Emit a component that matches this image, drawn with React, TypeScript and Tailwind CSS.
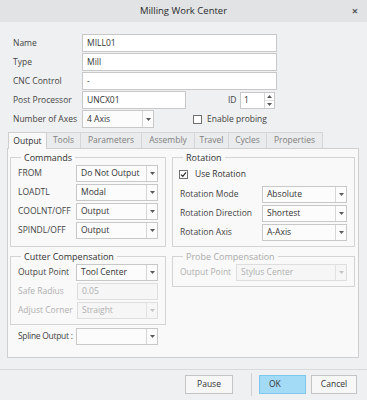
import React from 'react';

const Caret: React.FC<{ disabled?: boolean }> = ({ disabled }) => (
  <svg width="5" height="3" viewBox="0 0 5 3">
    <path d="M0 0H5L2.5 3Z" fill={disabled ? '#c4c4c4' : '#5a5a5a'} />
  </svg>
);

const TextBox: React.FC<{ value: string; className?: string; disabled?: boolean }> = ({ value, className, disabled }) => (
  <div
    className={`h-full border flex items-center px-[4px] ${disabled ? 'bg-[#f6f6f6] border-[#dedede] text-[#b0b0b0]' : 'bg-white border-[#c8c8c8] text-[#333]'} ${className ?? ''}`}
  >
    {value}
  </div>
);

const Select: React.FC<{ value: string; className?: string; disabled?: boolean }> = ({ value, className, disabled }) => (
  <div
    className={`h-full border flex items-stretch ${disabled ? 'bg-[#f6f6f6] border-[#dedede] text-[#b0b0b0]' : 'bg-[#fcfcfc] border-[#c8c8c8] text-[#333]'} ${className ?? ''}`}
  >
    <div className="flex-1 flex items-center px-[4px] whitespace-nowrap overflow-hidden">{value}</div>
    <div className={`w-[11px] border-l flex items-center justify-center ${disabled ? 'border-[#e2e2e2]' : 'border-[#d6d6d6]'}`}>
      <Caret disabled={disabled} />
    </div>
  </div>
);

const Check: React.FC<{ checked?: boolean }> = ({ checked }) => (
  <div className="w-[9px] h-[9px] border border-[#707070] bg-white flex items-center justify-center">
    {checked && (
      <svg width="7" height="7" viewBox="0 0 7 7">
        <path d="M1 3.6L2.8 5.3L6 1.4" stroke="#2a2a2a" strokeWidth="1.2" fill="none" />
      </svg>
    )}
  </div>
);

const Group: React.FC<{ title: string; disabled?: boolean; className?: string; children: React.ReactNode }> = ({ title, disabled, className, children }) => (
  <fieldset className={`border border-[#d4d4d4] px-[7px] ${className ?? ''}`}>
    <legend className={`ml-[3px] px-[3px] leading-[11px] text-[9px] ${disabled ? 'text-[#aaa]' : 'text-[#333]'}`}>{title}</legend>
    {children}
  </fieldset>
);

const FieldRow: React.FC<{ label: string; disabled?: boolean; children: React.ReactNode; labelW: string }> = ({ label, disabled, children, labelW }) => (
  <div className="flex items-center h-[17px]">
    <div className={`${labelW} shrink-0 whitespace-nowrap ${disabled ? 'text-[#b0b0b0]' : 'text-[#444]'}`}>{label}</div>
    <div className="flex-1 h-full">{children}</div>
  </div>
);

const tabs = [
  { name: 'Output', w: 'w-[39px]' },
  { name: 'Tools', w: 'w-[34px]' },
  { name: 'Parameters', w: 'w-[61px]' },
  { name: 'Assembly', w: 'w-[53px]' },
  { name: 'Travel', w: 'w-[34px]' },
  { name: 'Cycles', w: 'w-[38px]' },
  { name: 'Properties', w: 'w-[56px]' },
];

export default function App() {
  return (
    <div className="w-[367px] h-[400px] bg-[#eff0f1] flex flex-col font-['Open_Sans',sans-serif] text-[8.5px] text-[#444] overflow-hidden">
      {/* title bar */}
      <div className="h-[22px] shrink-0 bg-[#e1e3e5] flex items-center">
        <div className="w-[30px]" />
        <div className="flex-1 text-center text-[9.5px] text-[#2b2b2b]">Milling Work Center</div>
        <div className="w-[30px] flex justify-center pl-[6px] text-[11px] font-bold text-[#555]">×</div>
      </div>

      {/* header form */}
      <div className="pl-[13px] pt-[12px] flex flex-col gap-[1px]">
        <div className="flex items-center h-[18px]">
          <div className="w-[69px]">Name</div>
          <TextBox value="MILL01" className="w-[195px]" />
        </div>
        <div className="flex items-center h-[18px]">
          <div className="w-[69px]">Type</div>
          <TextBox value="Mill" className="w-[195px]" />
        </div>
        <div className="flex items-center h-[18px]">
          <div className="w-[69px]">CNC Control</div>
          <TextBox value="-" className="w-[195px]" />
        </div>
        <div className="flex items-center h-[18px]">
          <div className="w-[69px] whitespace-nowrap">Post Processor</div>
          <TextBox value="UNCX01" className="w-[104px]" />
          <div className="ml-[42px] w-[12px]">ID</div>
          <div className="h-[17px] w-[35px] bg-white border border-[#c8c8c8] flex text-[#333]">
            <div className="flex-1 flex items-center px-[3px]">1</div>
            <div className="w-[10px] border-l border-[#d6d6d6] flex flex-col">
              <div className="flex-1 flex items-center justify-center border-b border-[#e2e2e2]">
                <svg width="5" height="3" viewBox="0 0 5 3"><path d="M0 3H5L2.5 0Z" fill="#5a5a5a" /></svg>
              </div>
              <div className="flex-1 flex items-center justify-center">
                <Caret />
              </div>
            </div>
          </div>
        </div>
        <div className="flex items-center h-[18px]">
          <div className="w-[69px] whitespace-nowrap">Number of Axes</div>
          <Select value="4 Axis" className="w-[72px]" />
          <div className="ml-[39px] flex items-center gap-[5px]">
            <Check />
            <span>Enable probing</span>
          </div>
        </div>
      </div>

      {/* tabs */}
      <div className="ml-[8px] mt-[4px] h-[16px] flex items-end">
        {tabs.map((t, i) =>
          i === 0 ? (
            <div
              key={t.name}
              className={`${t.w} h-[17px] -mb-[1px] relative z-10 bg-[#f9f9f9] border border-b-0 border-[#cfcfcf] flex items-center justify-center text-[#2e2e2e]`}
            >
              {t.name}
            </div>
          ) : (
            <div
              key={t.name}
              className={`${t.w} h-[16px] bg-[#eaebec] border border-l-0 border-b-0 border-[#d6d6d6] flex items-center justify-center text-[#808080]`}
            >
              {t.name}
            </div>
          ),
        )}
      </div>

      {/* tab panel */}
      <div className="ml-[7px] w-[352px] h-[210px] bg-[#f9f9f9] border border-[#cfcfcf] px-[2px] pt-[3px]">
        <div className="grid grid-cols-[156px_183px] gap-x-[6px] items-stretch">
          <Group title="Commands" className="pb-[5px]">
            <div className="flex flex-col gap-[2px] pt-[2px]">
              <FieldRow label="FROM" labelW="w-[58px]"><Select value="Do Not Output" /></FieldRow>
              <FieldRow label="LOADTL" labelW="w-[58px]"><Select value="Modal" /></FieldRow>
              <FieldRow label="COOLNT/OFF" labelW="w-[58px]"><Select value="Output" /></FieldRow>
              <FieldRow label="SPINDL/OFF" labelW="w-[58px]"><Select value="Output" /></FieldRow>
            </div>
          </Group>
          <Group title="Rotation" className="pb-[5px]">
            <div className="flex flex-col gap-[2px]">
              <div className="flex items-center gap-[7px] h-[19px] -ml-[1px] mt-[2px]">
                <Check checked />
                <span className="text-[#333]">Use Rotation</span>
              </div>
              <FieldRow label="Rotation Mode" labelW="w-[82px]"><Select value="Absolute" /></FieldRow>
              <FieldRow label="Rotation Direction" labelW="w-[82px]"><Select value="Shortest" /></FieldRow>
              <FieldRow label="Rotation Axis" labelW="w-[82px]"><Select value="A-Axis" /></FieldRow>
            </div>
          </Group>
        </div>

        <div className="grid grid-cols-[156px_183px] gap-x-[6px] items-start mt-[4px]">
          <div className="flex flex-col">
            <Group title="Cutter Compensation" className="pb-[5px]">
              <div className="flex flex-col gap-[2px] pt-[2px]">
                <FieldRow label="Output Point" labelW="w-[58px]"><Select value="Tool Center" /></FieldRow>
                <FieldRow label="Safe Radius" labelW="w-[59px]" disabled><TextBox value="0.05" disabled /></FieldRow>
                <FieldRow label="Adjust Corner" labelW="w-[59px]" disabled><Select value="Straight" disabled /></FieldRow>
              </div>
            </Group>
            <div className="flex items-center h-[17px] mt-[3px] pl-[8px] pr-[8px]">
              <div className="w-[58px] whitespace-nowrap shrink-0 relative z-10 tracking-[-0.3px] text-[#444]">Spline Output :</div>
              <div className="flex-1 h-full"><Select value="" /></div>
            </div>
          </div>
          <Group title="Probe Compensation" disabled className="pb-[5px]">
            <div className="pt-[2px]">
              <FieldRow label="Output Point" labelW="w-[56px]" disabled><Select value="Stylus Center" disabled /></FieldRow>
            </div>
          </Group>
        </div>
      </div>

      {/* footer */}
      <div className="mt-[11px] border-t border-[#d9dadb] flex-1 flex items-start justify-end pr-[10px] pt-[5px]">
        <div className="w-[48px] h-[19px] bg-[#f7f7f7] border border-[#c4c4c4] flex items-center justify-center text-[#333]">Pause</div>
        <div className="w-px h-[23px] -mt-[2px] bg-[#cfd0d1] ml-[18px] mr-[7px]" />
        <div className="w-[47px] h-[19px] bg-[#a3dbf7] border border-[#7dc6ec] flex items-center pl-[9px] text-[#333]">OK</div>
        <div className="w-[46px] h-[19px] ml-[5px] bg-[#f7f7f7] border border-[#c4c4c4] flex items-center justify-center text-[#333]">Cancel</div>
      </div>
    </div>
  );
}
